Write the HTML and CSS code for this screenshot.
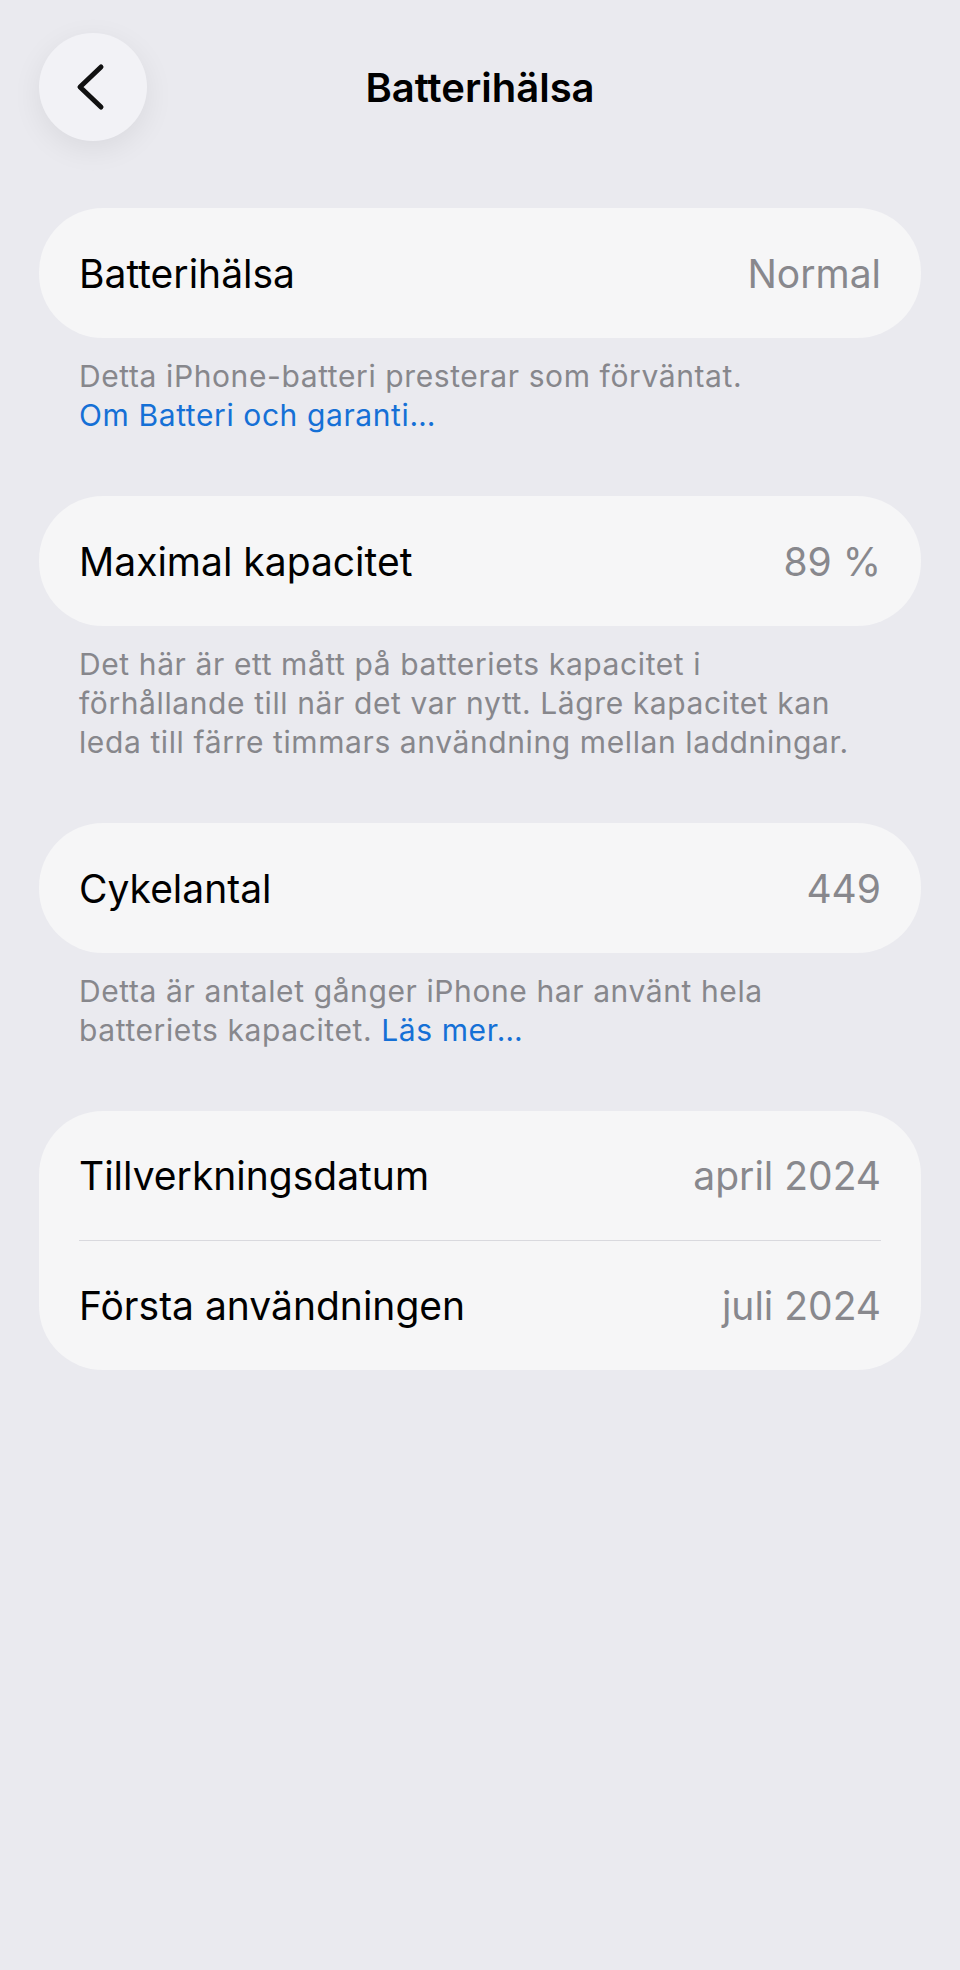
FILE: index.html
```html
<!DOCTYPE html>
<html lang="sv">
<head>
  <meta charset="UTF-8">
  <meta name="viewport" content="width=device-width, initial-scale=1.0">
  <title>Batterihälsa</title>
  <link rel="stylesheet" href="styles.css">
</head>
<body>
  <header class="nav">
    <button class="back" aria-label="Tillbaka">
      <svg width="30" height="48" viewBox="0 0 30 48">
        <path d="M26 4 L5 24 L26 44" fill="none" stroke="#111" stroke-width="5" stroke-linecap="round" stroke-linejoin="round"/>
      </svg>
    </button>
    <h1 class="title">Batterihälsa</h1>
    <span></span>
  </header>

  <main class="content">
    <section class="group">
      <div class="card">
        <div class="row"><span class="label">Batterihälsa</span><span class="value">Normal</span></div>
      </div>
      <p class="footer">Detta iPhone-batteri presterar som förväntat.<br><a href="#">Om Batteri och garanti…</a></p>
    </section>

    <section class="group">
      <div class="card">
        <div class="row"><span class="label">Maximal kapacitet</span><span class="value">89 %</span></div>
      </div>
      <p class="footer">Det här är ett mått på batteriets kapacitet i<br>förhållande till när det var nytt. Lägre kapacitet kan<br>leda till färre timmars användning mellan laddningar.</p>
    </section>

    <section class="group">
      <div class="card">
        <div class="row"><span class="label">Cykelantal</span><span class="value">449</span></div>
      </div>
      <p class="footer">Detta är antalet gånger iPhone har använt hela<br>batteriets kapacitet. <a href="#">Läs mer…</a></p>
    </section>

    <section class="group">
      <div class="card">
        <div class="row"><span class="label">Tillverkningsdatum</span><span class="value">april 2024</span></div>
        <div class="row"><span class="label">Första användningen</span><span class="value">juli 2024</span></div>
      </div>
    </section>
  </main>
</body>
</html>
```

FILE: styles.css
```css
body {
  margin: 0;
  background: #eaeaef;
  font-family: Inter, "Noto Sans", sans-serif;
  color: #000;
  min-height: 1970px;
}
.nav {
  display: grid;
  grid-template-columns: 108px 1fr 108px;
  align-items: center;
  padding: 33px 39px 0;
}
.back {
  width: 108px;
  height: 108px;
  border-radius: 50%;
  border: none;
  background: #f2f2f6;
  box-shadow: 0 8px 30px rgba(0,0,0,0.07);
  display: flex;
  align-items: center;
  justify-content: center;
  padding: 0 6px 0 0;
  cursor: pointer;
}
.title {
  margin: 0;
  text-align: center;
  font-size: 40px;
  font-weight: 600;
}
.content {
  padding: 67px 39px 0;
}
.group {
  margin-bottom: 61px;
}
.card {
  background: #f6f6f7;
  border-radius: 64px;
  padding: 0 40px;
}
.row {
  display: flex;
  justify-content: space-between;
  align-items: center;
  height: 130px;
  font-size: 39px;
}
.row + .row {
  border-top: 1px solid #d9d9de;
  height: 129px;
}
.card .row:first-child:not(:last-child) { height: 129px; }
.value { color: #88888d; }
.footer {
  margin: 19px 0 0;
  padding: 0 40px;
  font-size: 30px;
  letter-spacing: 0.6px;
  line-height: 39px;
  color: #87878c;
}
.footer a {
  color: #1570d6;
  text-decoration: none;
}
```
